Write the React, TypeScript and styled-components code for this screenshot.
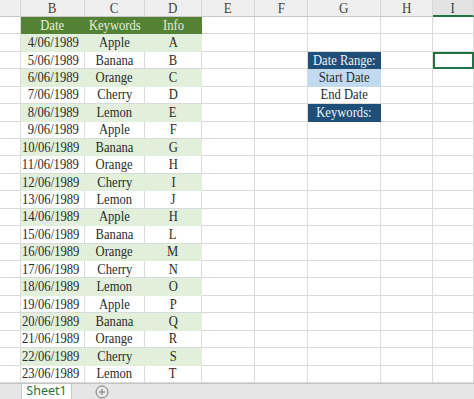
import styled, { createGlobalStyle } from "styled-components";

const GlobalStyle = createGlobalStyle`
    html, body {
        margin: 0;
        padding: 0;
        background: #ffffff;
        overflow: hidden;
    }
`;

type Fill = "none" | "head" | "band" | "navy" | "sky";

const fills: Record<Fill, { bg: string; fg: string }> = {
    none: { bg: "#ffffff", fg: "#2b2b2b" },
    head: { bg: "#548235", fg: "#e2efda" },
    band: { bg: "#e2efda", fg: "#2b2b2b" },
    navy: { bg: "#1f4e78", fg: "#eef3f8" },
    sky: { bg: "#c2daf0", fg: "#2a2a2a" },
};

const COLS = ["A", "B", "C", "D", "E", "F", "G", "H", "I"];
const KEYWORDS = ["Apple", "Banana", "Orange", "Cherry", "Lemon"];
const INFO = "ABCDEFGHIJHLMNOPQRST".split("");

const G_CELLS: Record<number, { text: string; fill: Fill }> = {
    3: { text: "Date Range:", fill: "navy" },
    4: { text: "Start Date", fill: "sky" },
    5: { text: "End Date", fill: "none" },
    6: { text: "Keywords:", fill: "navy" },
};

const App = () => {
    const rows = Array.from({ length: 21 }, (_, i) => i + 1);

    const renderRow = (r: number) => {
        const n = r - 2;
        const isTitle = r === 1;
        const tableFill: Fill = isTitle ? "head" : n % 2 === 0 ? "band" : "none";
        const g = G_CELLS[r];

        return COLS.map((c) => {
            const key = `${c}${r}`;
            if (c === "B")
                return (
                    <Cell key={key} $fill={tableFill} $align={isTitle ? "center" : "right"}>
                        <CellText $align={isTitle ? "center" : "right"}>
                            {isTitle ? "Date" : `${n + 4}/06/1989`}
                        </CellText>
                    </Cell>
                );
            if (c === "C")
                return (
                    <Cell key={key} $fill={tableFill}>
                        <CellText>{isTitle ? "Keywords" : KEYWORDS[n % 5]}</CellText>
                    </Cell>
                );
            if (c === "D")
                return (
                    <Cell key={key} $fill={tableFill}>
                        <CellText>{isTitle ? "Info" : INFO[n]}</CellText>
                    </Cell>
                );
            if (c === "G" && g)
                return (
                    <Cell key={key} $fill={g.fill}>
                        <CellText>{g.text}</CellText>
                    </Cell>
                );
            if (c === "I" && r === 3) return <Cell key={key} $selected />;
            return <Cell key={key} />;
        });
    };

    return (
        <>
            <GlobalStyle />
            <Sheet>
                <Grid>
                    {COLS.map((c) => (
                        <ColHead key={c} $active={c === "I"}>
                            <CellText>{c === "A" ? "" : c}</CellText>
                        </ColHead>
                    ))}
                    {rows.map(renderRow)}
                </Grid>
                <TabBar>
                    <TabNav />
                    <Tab>Sheet1</Tab>
                    <AddSheet>
                        <svg width="14" height="14" viewBox="0 0 14 14">
                            <circle cx="7" cy="7" r="6" fill="none" stroke="#7a7a7a" strokeWidth="1" />
                            <path d="M7 4v6M4 7h6" stroke="#7a7a7a" strokeWidth="1" />
                        </svg>
                    </AddSheet>
                </TabBar>
            </Sheet>
        </>
    );
};

const Sheet = styled.div`
    width: 474px;
    height: 399px;
    display: flex;
    flex-direction: column;
    font-family: "Liberation Serif", "Times New Roman", serif;
`;

const Grid = styled.div`
    height: 383px;
    display: grid;
    grid-template-columns: 21px 64px 60px 57px 53px 53px 73px 52px 1fr;
    grid-template-rows: 17px repeat(21, 1fr);
`;

const ColHead = styled.div<{ $active?: boolean }>`
    display: flex;
    align-items: center;
    justify-content: center;
    background: ${({ $active }) => ($active ? "#e3e3e3" : "#efefef")};
    border-right: 1px solid #d6d6d6;
    border-bottom: ${({ $active }) => ($active ? "2px solid #217346" : "1px solid #c8c8c8")};
    color: #444444;
    font-size: 15.5px;
    box-sizing: border-box;
`;

const Cell = styled.div<{ $fill?: Fill; $align?: "center" | "right"; $selected?: boolean }>`
    display: flex;
    align-items: center;
    justify-content: ${({ $align }) => ($align === "right" ? "flex-end" : "center")};
    padding: 0 ${({ $align }) => ($align === "right" ? "5px" : "0")} 0 0;
    background: ${({ $fill = "none" }) => fills[$fill].bg};
    color: ${({ $fill = "none" }) => fills[$fill].fg};
    border-right: 1px solid ${({ $fill = "none" }) => ($fill === "none" ? "#dadada" : fills[$fill].bg)};
    border-bottom: 1px solid ${({ $fill = "none" }) => ($fill === "none" ? "#dadada" : fills[$fill].bg)};
    outline: ${({ $selected }) => ($selected ? "2px solid #217346" : "none")};
    outline-offset: -2px;
    font-size: 15px;
    white-space: nowrap;
    overflow: hidden;
    box-sizing: border-box;
`;

/* the sheet font is a narrow Chinese-locale serif: squeeze Liberation Serif to match */
const CellText = styled.span<{ $align?: "center" | "right" }>`
    display: inline-block;
    transform: scaleX(0.84);
    transform-origin: ${({ $align }) => ($align === "right" ? "right" : "center")} center;
    line-height: 1;
`;

const TabBar = styled.div`
    flex: 1;
    display: flex;
    align-items: stretch;
    background: #e6e6e6;
    border-top: 1px solid #c4c4c4;
    box-sizing: border-box;
`;

const TabNav = styled.div`
    width: 21px;
    border-right: 1px solid #c8c8c8;
`;

const Tab = styled.div`
    width: 49px;
    display: flex;
    align-items: center;
    justify-content: center;
    background: #ffffff;
    border-right: 1px solid #c8c8c8;
    color: #217346;
    font-family: "Noto Sans", "Open Sans", sans-serif;
    font-size: 12.5px;
    line-height: 1;
`;

const AddSheet = styled.div`
    width: 60px;
    display: flex;
    align-items: center;
    justify-content: center;
`;

export default App;
